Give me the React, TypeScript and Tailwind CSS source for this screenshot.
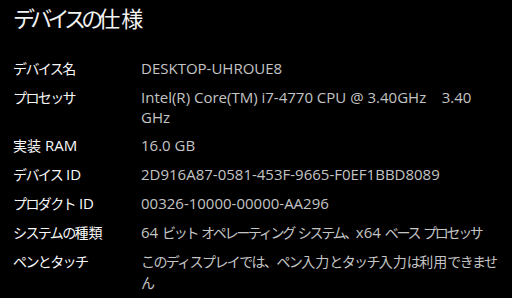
type Spec = { label: string; value: string; tight?: boolean };

const specs: Spec[] = [
  { label: 'デバイス名', value: 'DESKTOP-UHROUE8' },
  { label: 'プロセッサ', value: 'Intel(R) Core(TM) i7-4770 CPU @ 3.40GHz\u00a0\u00a0\u00a0 3.40 GHz' },
  { label: '実装 RAM', value: '16.0 GB' },
  { label: 'デバイス ID', value: '2D916A87-0581-453F-9665-F0EF1BBD8089' },
  { label: 'プロダクト ID', value: '00326-10000-00000-AA296' },
  { label: 'システムの種類', value: '64 ビット オペレーティング システム、x64 ベース プロセッサ', tight: true },
  { label: 'ペンとタッチ', value: 'このディスプレイでは、ペン入力とタッチ入力は利用できません' },
];

type Kind = 'kana' | 'kanji' | 'latin';

const kindOf = (ch: string): Kind => {
  const c = ch.charCodeAt(0);
  if (c >= 0x3000 && c <= 0x30ff) return 'kana';
  if (c >= 0x4e00 && c <= 0x9fff) return 'kanji';
  return 'latin';
};

// split a string into runs of kana, kanji and latin text
function runs(text: string) {
  const out: { kind: Kind; text: string }[] = [];
  for (const ch of text) {
    const k = kindOf(ch);
    const last = out[out.length - 1];
    if (last && last.kind === k) last.text += ch;
    else out.push({ kind: k, text: ch });
  }
  return out;
}

// Yu Gothic UI sets kana narrower than kanji, next to Segoe UI latin
function Mixed({ text, tight }: { text: string; tight?: boolean }) {
  return (
    <>
      {runs(text).map((r, i) => {
        if (r.kind === 'kana')
          return (
            <span key={i} className={tight ? 'text-[14px] tracking-[-2.3px]' : 'text-[14px] tracking-[-1.6px]'}>
              {r.text}
            </span>
          );
        if (r.kind === 'kanji')
          return (
            <span key={i} className="text-[14px]">
              {r.text}
            </span>
          );
        return <span key={i}>{r.text}</span>;
      })}
    </>
  );
}

export default function App() {
  return (
    <div
      className="w-[512px] h-[298px] overflow-hidden bg-black pl-[13px] pt-[5px]"
      style={{ fontFamily: '"Open Sans", "Noto Sans CJK JP", sans-serif' }}
    >
      <h1 className="text-[22px] leading-[26px] text-[#f2f2f2] font-normal">
        <span className="tracking-[-4.8px]">デバイスの</span>
        <span className="tracking-[1px]">仕様</span>
      </h1>

      <div className="mt-[27px] flex flex-col gap-[8px]">
        {specs.map((row) => (
          <div key={row.label} className="flex text-[15px] leading-[20px]">
            <div className="w-[128px] shrink-0 text-[#f8f8f8]">
              <Mixed text={row.label} />
            </div>
            <div className="w-[360px] text-[#c4c4c4]">
              <Mixed text={row.value} tight={row.tight} />
            </div>
          </div>
        ))}
      </div>
    </div>
  );
}
